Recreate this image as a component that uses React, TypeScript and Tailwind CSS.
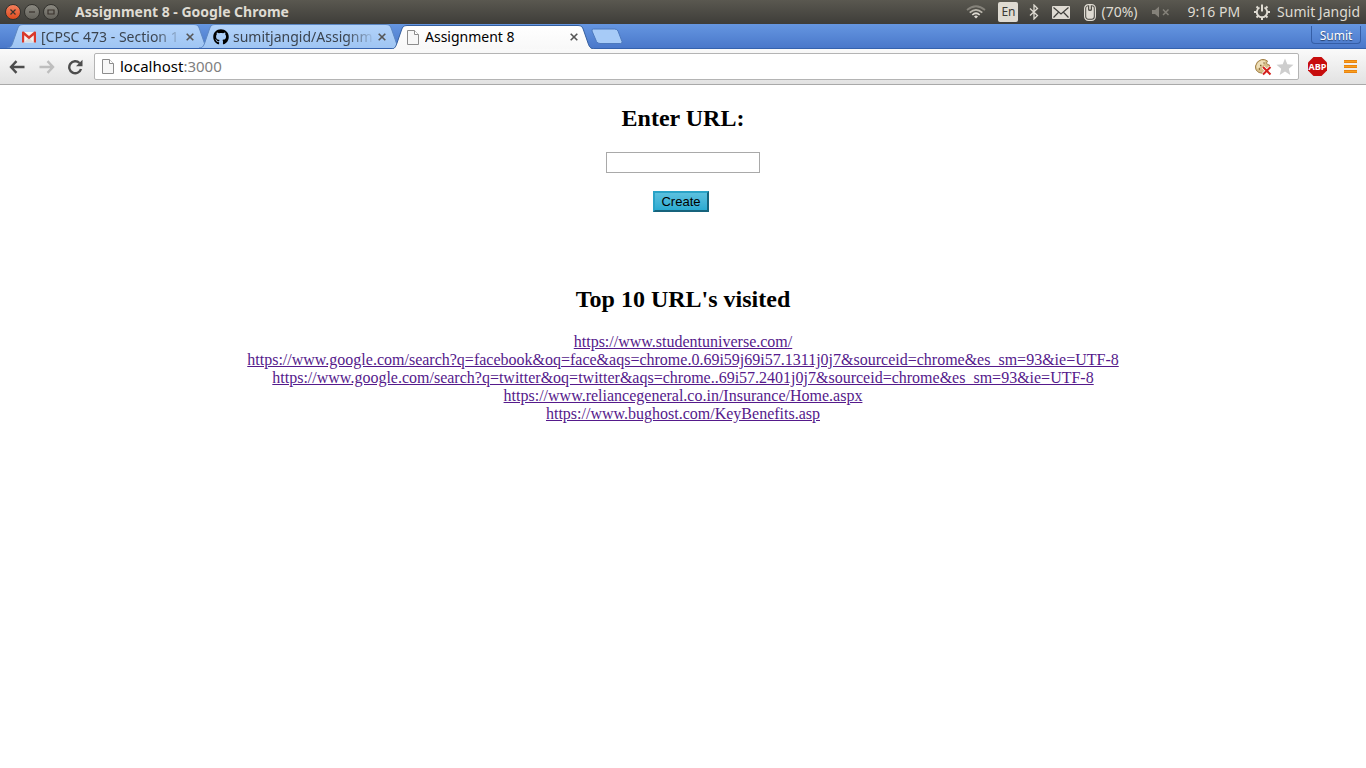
import React from "react";
import type { ReactNode } from "react";
import { FaGithub } from "react-icons/fa";

const links = [
  "https://www.studentuniverse.com/",
  "https://www.google.com/search?q=facebook&oq=face&aqs=chrome.0.69i59j69i57.1311j0j7&sourceid=chrome&es_sm=93&ie=UTF-8",
  "https://www.google.com/search?q=twitter&oq=twitter&aqs=chrome..69i57.2401j0j7&sourceid=chrome&es_sm=93&ie=UTF-8",
  "https://www.reliancegeneral.co.in/Insurance/Home.aspx",
  "https://www.bughost.com/KeyBenefits.asp",
];

function PageIcon({ className }: { className: string }) {
  return (
    <svg viewBox="0 0 12 15" className={className} aria-hidden="true">
      <path d="M.5.5H7.5L11.5 4.5V14.5H.5Z" fill="#f7f7f7" stroke="#8c8c8c" />
      <path d="M7.5.5V4.5H11.5" fill="#fff" stroke="#8c8c8c" />
    </svg>
  );
}

function GmailIcon() {
  return (
    <svg viewBox="0 0 14 12" className="ml-px h-3 w-3.5" aria-hidden="true">
      <path d="M1 1H13V11.5H1Z" fill="#f2f2f2" />
      <path d="M2.5 11L7 6.5L11.5 11Z" fill="#dcdcdc" />
      <path d="M0 1.5Q0 0 1.6.5L7 5L12.4.5Q14 0 14 1.5V11.5H11.8V4.3L7 8.2L2.2 4.3V11.5H0Z" fill="#d9392c" />
    </svg>
  );
}

function Tab({ icon, title, active }: { icon: ReactNode; title: string; active?: boolean }) {
  const edge = "M0 24C4 24 5 21 6 18L10.500 5C11.500 2 12.500 .5 16 .5H187C190.500 .5 191.500 2 192.500 5L197 18C198 21 199 24 204 24";
  return (
    <div className={"relative -mr-3 h-6 w-[204px] shrink-0 " + (active ? "z-10" : "")}>
      <svg viewBox="0 0 204 24" preserveAspectRatio="none" className="absolute inset-0 h-full w-full" aria-hidden="true">
        <defs>
          <linearGradient id="tab-idle" x2="0" y2="1">
            <stop stopColor="#b3d3fa" />
            <stop offset="1" stopColor="#9fc5f3" />
          </linearGradient>
          <linearGradient id="tab-active" x2="0" y2="1">
            <stop stopColor="#ffffff" />
            <stop offset="1" stopColor="#f8f8f8" />
          </linearGradient>
        </defs>
        <path d={edge} fill={active ? "url(#tab-active)" : "url(#tab-idle)"} stroke={active ? "#355f9f" : "#5c87c3"} />
      </svg>
      <div className={"relative flex h-full items-center px-3.5 " + (active ? "" : "pt-0.5")}>
        <span className="flex w-5 shrink-0 items-center">{icon}</span>
        <span
          className={
            "min-w-0 flex-1 overflow-hidden whitespace-nowrap text-sm leading-5 " +
            (active ? "text-black" : "text-[#3b444f] mask-r-from-80%")
          }
        >
          {title}
        </span>
        <button type="button" aria-label={"Close " + title} className="flex h-4 w-3.5 items-center justify-center">
          <svg viewBox="0 0 8 8" className="h-2 w-2" stroke="#555" strokeWidth="1.600" aria-hidden="true">
            <path d="M.7 .7L7.300 7.300M7.300 .7L.7 7.300" />
          </svg>
        </button>
      </div>
    </div>
  );
}

function WindowButton({ label, close, children }: { label: string; close?: boolean; children: ReactNode }) {
  return (
    <button
      type="button"
      aria-label={label}
      className={
        "h-4 w-4 rounded-full border border-[#33322e] " +
        (close ? "bg-linear-to-b from-[#f37f5b] to-[#df4a1a]" : "bg-linear-to-b from-[#8b8981] to-[#64625b]")
      }
    >
      <svg viewBox="0 0 14 14" className="h-3.5 w-3.5" fill="none" stroke="#3a332d" strokeWidth="1.200" aria-hidden="true">
        {children}
      </svg>
    </button>
  );
}

function SystemBar() {
  return (
    <header className="flex h-6 items-center bg-linear-to-b from-[#5a5850] to-[#3e3d39] pl-[5px] pr-1.5 text-sm text-[#dfdbd2]">
      <div className="flex gap-[3px]">
        <WindowButton label="Close window" close>
          <path d="M4.500 4.500L9.500 9.500M9.500 4.500L4.500 9.500" />
        </WindowButton>
        <WindowButton label="Minimize window">
          <path d="M4 7H10" />
        </WindowButton>
        <WindowButton label="Maximize window">
          <path d="M4 5H10V9H4Z" />
        </WindowButton>
      </div>
      <span className="ml-4 flex-1 truncate font-bold">Assignment 8 - Google Chrome</span>
      <div className="flex shrink-0 items-center">
        <svg viewBox="0 0 20 14" className="h-3.5 w-5" fill="none" strokeWidth="1.700" aria-hidden="true">
          <path d="M1 5Q10-2.500 19 5" stroke="#85827a" />
          <path d="M3.700 7.700Q10 2 16.300 7.700" stroke="#bcb8ae" />
          <path d="M6.300 10Q10 6.500 13.700 10" stroke="#dfdbd2" />
          <path d="M8 11.500Q10 9.500 12 11.500L10 13.500Z" fill="#dfdbd2" stroke="none" />
        </svg>
        <span className="ml-3 flex h-5 w-5 items-center justify-center rounded-xs bg-[#dfdbd2] text-xs text-[#3c3b37]">En</span>
        <svg viewBox="0 0 10 16" className="ml-[11px] h-4 w-2.5" fill="none" stroke="#dfdbd2" strokeWidth="1.300" aria-hidden="true">
          <path d="M1 4.500L8.500 11.500L5 15V1L8.500 4.500L1 11.500" />
        </svg>
        <svg viewBox="0 0 18 13" className="ml-[13px] h-[13px] w-[18px]" aria-hidden="true">
          <rect width="18" height="13" rx="1" fill="#dfdbd2" />
          <path d="M1.500 1.500L9 8L16.500 1.500M1.500 11.500L6.300 6.500M16.500 11.500L11.700 6.500" fill="none" stroke="#3f3e3a" strokeWidth="1.200" />
        </svg>
        <svg viewBox="0 0 12 17" className="ml-3.5 h-[17px] w-3" aria-hidden="true">
          <rect x=".6" y=".6" width="10.800" height="15.800" rx="3.800" fill="none" stroke="#dfdbd2" strokeWidth="1.200" />
          <path d="M2.200 4Q2.200 2.300 4 2.300V5.500Q4 7 6 7Q8 7 8 5.500V2.300Q9.800 2.300 9.800 4V12.500Q9.800 14.700 7.800 14.700H4.200Q2.200 14.700 2.200 12.500Z" fill="#dfdbd2" />
          <path d="M6 1V5.500" stroke="#dfdbd2" strokeWidth="1.500" />
        </svg>
        <span className="ml-[5px]">(70%)</span>
        <svg viewBox="0 0 18 12" className="ml-3.5 h-3 w-[18px]" fill="#85827a" aria-hidden="true">
          <path d="M0 4H3L7 .5V11.500L3 8H0Z" />
          <path d="M11 3.500L16.500 9M16.500 3.500L11 9" stroke="#85827a" strokeWidth="1.500" />
        </svg>
        <span className="ml-[18px]">9:16 PM</span>
        <svg viewBox="0 0 16 16" className="ml-3.5 h-4 w-4" fill="none" stroke="#dfdbd2" aria-hidden="true">
          <path d="M5.500 3.500A5.200 5.200 0 1 0 10.500 3.500" strokeWidth="1.900" />
          <path d="M8 .5V7.500" strokeWidth="2" />
          <path d="M4 4L2.500 2.500M12 4L13.500 2.500M3 8H0M13 8H16M4.300 11.700L2.500 13.500M11.700 11.700L13.500 13.500M8 13V16" strokeWidth="2" />
        </svg>
        <span className="ml-[7px]">Sumit Jangid</span>
      </div>
    </header>
  );
}

function TabStrip() {
  return (
    <nav className="flex h-[25px] items-end border-b border-[#3562ad] bg-linear-to-b from-[#6596e1] to-[#4a78ca] pl-[7px] pr-[5px]">
      <Tab icon={<GmailIcon />} title="[CPSC 473 - Section 1" />
      <Tab icon={<FaGithub className="h-4 w-4 text-black" />} title="sumitjangid/Assignm" />
      <div className="z-10 -mb-px flex">
        <Tab icon={<PageIcon className="ml-0.5 h-[15px] w-3" />} title="Assignment 8" active />
      </div>
      <button type="button" aria-label="New tab" className="ml-[7px] self-center pt-px">
        <svg viewBox="0 0 34 17" className="h-[17px] w-[34px]" aria-hidden="true">
          <path d="M3.500 1H24.500Q27 1 28 3L32 13.500Q32.500 15.500 30.500 15.500H10Q7.500 15.500 6.500 13.500L2 3Q1.500 1 3.500 1Z" fill="#a7cbf7" stroke="#4d79bd" />
        </svg>
      </button>
      <button
        type="button"
        className="mb-1 ml-auto flex h-[18px] w-[50px] items-center justify-center rounded-b-sm border border-t-0 border-[#355ea6] pt-0.5 text-xs leading-4 text-white text-shadow-[0_1px_1px_#253f6a]"
      >
        Sumit
      </button>
    </nav>
  );
}

function Toolbar() {
  return (
    <div className="flex h-9 items-center border-b border-[#a9a9a9] bg-linear-to-b from-[#fafafa] to-[#e2e2e2] pl-[9px] pr-[9px]">
      <button type="button" aria-label="Back">
        <svg viewBox="0 0 16 14" className="h-3.5 w-4" fill="none" stroke="#4d4d4d" strokeWidth="2.400" aria-hidden="true">
          <path d="M7.500 1.200L2 7L7.500 12.800M2 7H15.500" />
        </svg>
      </button>
      <button type="button" aria-label="Forward" className="ml-3.5">
        <svg viewBox="0 0 16 14" className="h-3.5 w-4" fill="none" stroke="#bebebe" strokeWidth="2.400" aria-hidden="true">
          <path d="M8.500 1.200L14 7L8.500 12.800M14 7H.5" />
        </svg>
      </button>
      <button type="button" aria-label="Reload" className="ml-3">
        <svg viewBox="0 0 16 16" className="h-4 w-4" fill="none" aria-hidden="true">
          <path d="M12.500 4A6 6 0 1 0 14 10" stroke="#4d4d4d" strokeWidth="2.400" />
          <path d="M15.500 .8V7.300H9Z" fill="#4d4d4d" />
        </svg>
      </button>
      <div className="ml-[11px] flex h-[27px] flex-1 items-center rounded-xs border border-[#b4b4b4] bg-white pl-[7px] pr-1">
        <PageIcon className="h-[15px] w-3" />
        <span className="ml-1.5 flex-1 pb-0.5 text-[15px] leading-5 text-[#808080]">
          <span className="text-black">localhost</span>:3000
        </span>
        <svg viewBox="0 0 18 18" className="h-[18px] w-[18px]" aria-hidden="true">
          <path d="M7.500 1.500H10.500L13.500 3L12.500 5L13.500 6.500L15.500 7Q16 11 13 14Q9.500 16.500 5 14.500Q1 12.500 1.500 8Q2.500 3 7.500 1.500Z" fill="#d6bd86" stroke="#a5854e" />
          <path d="M2.500 8.500Q3 4 7.500 2.500L11.500 3Q10.500 6.500 8 8Q5 9.500 3 11Z" fill="#eedfb9" />
          <path d="M6 7.500H7.500M9.500 5H10.500M5 11H6" stroke="#80602f" strokeWidth="1.300" />
          <path d="M9 9L16.500 16.500M16.500 9L9 16.500" stroke="#fff" strokeWidth="3.500" />
          <path d="M9 9L16.500 16.500M16.500 9L9 16.500" stroke="#d4201c" strokeWidth="2" />
        </svg>
        <button type="button" aria-label="Bookmark this page" className="ml-1">
          <svg viewBox="0 0 18 18" className="h-[18px] w-[18px]" fill="#cecece" aria-hidden="true">
            <path d="M9 .5L11.300 6.200L17.500 6.700L12.800 10.700L14.300 17L9 13.500L3.700 17L5.200 10.700L.5 6.700L6.700 6.200Z" />
          </svg>
        </button>
      </div>
      <button type="button" aria-label="Adblock Plus" className="ml-2">
        <svg viewBox="0 0 21 21" className="h-[21px] w-[21px]" aria-hidden="true">
          <path d="M6.500 1H14.500L20 6.500V14.500L14.500 20H6.500L1 14.500V6.500Z" fill="#c70d0d" />
          <text x="10.500" y="14" textAnchor="middle" fontFamily="Open Sans, sans-serif" fontWeight="bold" fontSize="9" fill="#fff">ABP</text>
        </svg>
      </button>
      <button type="button" aria-label="Chrome menu" className="ml-4">
        <svg viewBox="0 0 13 13" className="h-[13px] w-[13px]" aria-hidden="true">
          <path d="M0 0H13V3H0ZM0 5H13V8H0ZM0 10H13V13H0Z" fill="#f8a01c" />
          <path d="M0 2.500H13M0 7.500H13M0 12.500H13M0 .5H13M0 5.500H13M0 10.500H13" stroke="#e98310" />
        </svg>
      </button>
    </div>
  );
}

export default function App() {
  return (
    <div className="min-h-screen bg-white">
      <div className="font-['Noto_Sans',sans-serif]">
        <SystemBar />
        <TabStrip />
        <Toolbar />
      </div>
      <main className="flex flex-col items-center px-2 pt-5 font-['Liberation_Serif',serif] text-base text-black">
        <h2 className="text-2xl leading-[26px] font-bold">
          <label htmlFor="url">Enter URL:</label>
        </h2>
        <form className="mt-[21px] flex flex-col items-center" onSubmit={(e) => e.preventDefault()}>
          <input id="url" type="text" className="h-[21px] w-[154px] border border-[#a9a9a9] px-px font-['Liberation_Sans',sans-serif] text-[13px]" />
          <button
            type="submit"
            className="mt-[18px] mr-1 h-[21px] w-14 border-2 border-t-[#2aa3c7] border-r-[#16637c] border-b-[#16637c] border-l-[#2aa3c7] bg-linear-to-b from-[#5bc0de] to-[#2aabd2] font-['Liberation_Sans',sans-serif] text-[13px] leading-4"
          >
            Create
          </button>
        </form>
        <h2 className="mt-[74px] text-2xl leading-[26px] font-bold">Top 10 URL's visited</h2>
        <ul className="mt-[21px] text-center leading-[18px]">
          {links.map((url) => (
            <li key={url}>
              <a href={url} className="text-[#551a8b] underline">
                {url}
              </a>
            </li>
          ))}
        </ul>
      </main>
    </div>
  );
}
